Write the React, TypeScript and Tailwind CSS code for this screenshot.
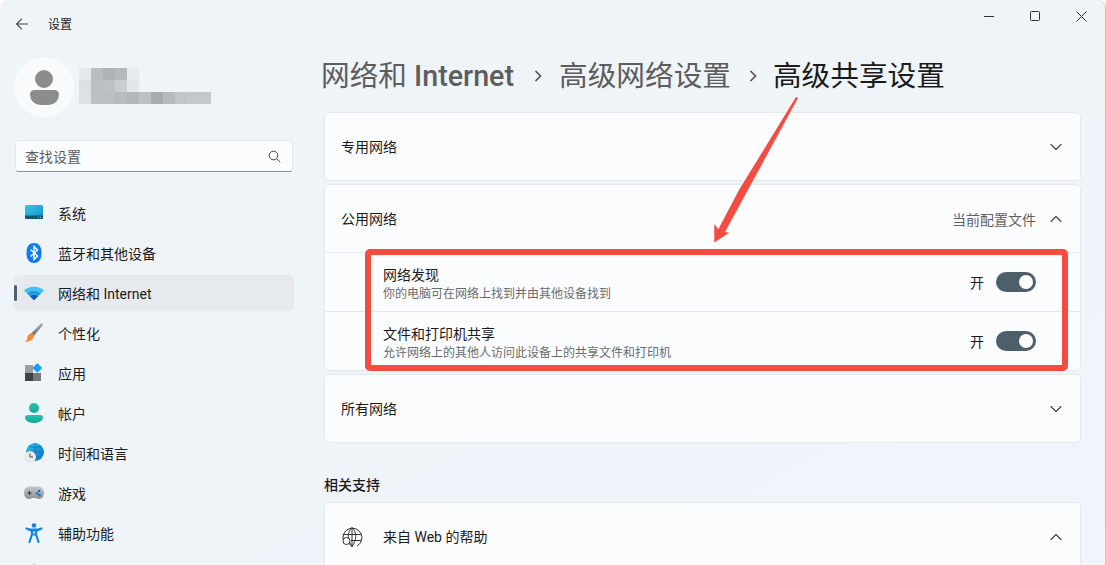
import React from "react";

function SysIcon() {
  return (
    <svg width="20" height="20" viewBox="0 0 20 20">
      <defs><linearGradient id="s1" x1="0" y1="0" x2="1" y2="1"><stop offset="0" stopColor="#38c6e6" /><stop offset="1" stopColor="#1490c8" /></linearGradient></defs>
      <rect x="1" y="2" width="18" height="14" rx="1.5" fill="url(#s1)" />
      <path d="M1 12.5h18v2a1.5 1.5 0 0 1-1.5 1.5h-15A1.5 1.5 0 0 1 1 14.500z" fill="#0f5673" />
      <rect x="14" y="13.800" width="1" height="1" fill="#9fd8ea" /><rect x="16" y="13.800" width="1" height="1" fill="#9fd8ea" />
    </svg>
  );
}
function BtIcon() {
  return (
    <svg width="20" height="20" viewBox="0 0 20 20">
      <path d="M10 0c4.500 0 7.500 3 7.500 10s-3 10-7.500 10-7.500-3-7.500-10S5.500 0 10 0z" fill="#0a7cf0" />
      <path d="M6.500 6.500l7 6.500-3.500 3.500V3.500l3.500 3.500-7 6.500" fill="none" stroke="#fff" strokeWidth="1.400" />
    </svg>
  );
}
function WifiIcon() {
  return (
    <svg width="20" height="20" viewBox="0 0 20 20">
      <g transform="translate(0 1)">
        <path d="M0 6.500C5 1.500 15 1.500 20 6.500l-3 3C12.500 5.500 7.500 5.500 3 9.500z" fill="#3fc3f2" />
        <path d="M3 9.500C7.500 5.500 12.500 5.500 17 9.500l-2.800 2.800C11.500 10 8.500 10 5.800 12.300z" fill="#1b9de2" />
        <path d="M5.800 12.300C8.500 10 11.500 10 14.200 12.300L10 16.500z" fill="#0a5fb4" />
      </g>
    </svg>
  );
}
function BrushIcon() {
  return (
    <svg width="20" height="20" viewBox="0 0 20 20">
      <defs><linearGradient id="b1" x1="0" y1="1" x2="1" y2="0"><stop offset="0" stopColor="#6d7075" /><stop offset="1" stopColor="#a9adb2" /></linearGradient></defs>
      <path d="M7 10.500L17 0.500c1-0.500 2 0 2 1.500L10 13z" fill="url(#b1)" />
      <path d="M6.500 10.500c1.500-0.500 3 0.500 3.500 2.500-0.500 3-3 5.500-9 6 2-1.500 2-3 2.500-5 0.300-1.500 1.500-3 3-3.500z" fill="#f08a36" />
    </svg>
  );
}
function AppsIcon() {
  return (
    <svg width="20" height="20" viewBox="0 0 20 20">
      <rect x="1" y="2" width="8" height="8" fill="#9a9da1" />
      <rect x="1" y="10" width="8" height="8" fill="#3f4245" />
      <rect x="9" y="10" width="8" height="8" fill="#74777b" />
      <rect x="9.800" y="1.500" width="7" height="7" rx="1" transform="rotate(45 13.300 5)" fill="#18a0ec" />
    </svg>
  );
}
function UserIcon() {
  return (
    <svg width="20" height="20" viewBox="0 0 20 20">
      <defs><linearGradient id="u1" x1="0" y1="0" x2="0" y2="1"><stop offset="0" stopColor="#25c4ad" /><stop offset="1" stopColor="#17a898" /></linearGradient></defs>
      <circle cx="10" cy="5" r="5" fill="url(#u1)" />
      <path d="M3.500 12h13a2.500 2.500 0 0 1 2.500 2.500c0 3-4 5.500-9 5.500s-9-2.500-9-5.500A2.500 2.500 0 0 1 3.500 12z" fill="url(#u1)" />
    </svg>
  );
}
function TimeIcon() {
  return (
    <svg width="20" height="20" viewBox="0 0 20 20">
      <defs><linearGradient id="t1" x1="0" y1="0" x2="1" y2="1"><stop offset="0" stopColor="#2fc3e8" /><stop offset="1" stopColor="#0b70c9" /></linearGradient></defs>
      <circle cx="11" cy="9" r="9" fill="url(#t1)" />
      <path d="M2 9h18M11 0v18M5 3c4 2 8 2 12 0M5 15c4-2 8-2 12 0" stroke="#0a63b0" strokeWidth=".6" fill="none" />
      <circle cx="6" cy="14" r="6" fill="#e9e9ea" />
      <path d="M6 10.500V14h3" stroke="#444" strokeWidth="1" fill="none" />
    </svg>
  );
}
function GameIcon() {
  return (
    <svg width="20" height="20" viewBox="0 0 20 20">
      <defs><linearGradient id="g1" x1="0" y1="0" x2="0" y2="1"><stop offset="0" stopColor="#c3c6cb" /><stop offset="1" stopColor="#8d9096" /></linearGradient></defs>
      <path d="M5.500 3.500h9C18 3.500 20 6.500 20 10c0 3-2 6-5 6-2 0-2.500-1-3.500-1h-3c-1 0-1.500 1-3.500 1-3 0-5-3-5-6 0-3.500 2-6.500 5.500-6.500z" fill="url(#g1)" />
      <path d="M3.500 10h4M5.500 8v4" stroke="#333" strokeWidth="1" />
      <circle cx="15" cy="8" r="1.300" fill="#1273cf" /><circle cx="13" cy="10.500" r="1.300" fill="#1273cf" /><circle cx="15.500" cy="12" r="1.300" fill="#1273cf" />
    </svg>
  );
}
function AccessIcon() {
  return (
    <svg width="20" height="20" viewBox="0 0 20 20">
      <circle cx="10" cy="2.500" r="2.300" fill="#1187e0" />
      <path d="M2.500 5.500L7 7.500h6l4.500-2M8 7.500v4L5.500 19M12 7.500v4l2.500 7.500M8.500 11.500h3" stroke="#1187e0" strokeWidth="2.200" fill="#1187e0" strokeLinecap="round" strokeLinejoin="round" />
    </svg>
  );
}
function ShieldIcon() {
  return (
    <svg width="20" height="20" viewBox="0 0 20 20">
      <path d="M10 1c2 2 5 3 8 3v6c0 5-4 8-8 9-4-1-8-4-8-9V4c3 0 6-1 8-3z" fill="#9a9da1" />
    </svg>
  );
}
function Chevron({ up }: { up?: boolean }) {
  return (
    <svg width="12" height="12" viewBox="0 0 12 12" fill="none" stroke="#404040" strokeWidth="1.100" strokeLinecap="round" strokeLinejoin="round">
      <path d={up ? "M1 8.500l5-5 5 5" : "M1 3.500l5 5 5-5"} />
    </svg>
  );
}
function Crumb({ className }: { className: string }) {
  return (
    <svg className={className} width="8" height="12" viewBox="0 0 8 12" fill="none" stroke="#555" strokeWidth="1.700">
      <path d="M1.500 1L6.500 6l-5 5" />
    </svg>
  );
}

const nav: [React.ReactNode, string][] = [
  [<SysIcon />, "系统"],
  [<BtIcon />, "蓝牙和其他设备"],
  [<WifiIcon />, "网络和 Internet"],
  [<BrushIcon />, "个性化"],
  [<AppsIcon />, "应用"],
  [<UserIcon />, "帐户"],
  [<TimeIcon />, "时间和语言"],
  [<GameIcon />, "游戏"],
  [<AccessIcon />, "辅助功能"],
  [<ShieldIcon />, ""],
];

const mosaic: string[][] = [
  ["#e4e9ec", "#b8bdbf", "#aeb3b5", "#b4b9bb", "#e6ebee"],
  ["#dbe0e3", "#bbc0c3", "#bcc1c4", "#c9ced0", "#e2e7e9"],
  ["#dce1e4", "#bbc0c3", "#babfc2", "#b6bbbe", "#b1b6b9", "#bcc1c4", "#a7acaf", "#b5babd", "#c1c6c9", "#c3c8cb", "#c3c8cb"],
];

function Toggle() {
  return (
    <div className="flex items-center gap-3">
      <span className="text-[14px] leading-5 pt-[2px] text-[#1b1b1b]">开</span>
      <div className="w-10 h-5 rounded-full bg-[#4d5f6b] flex items-center justify-end pr-[3px]">
        <div className="w-[14px] h-[14px] rounded-full bg-white" />
      </div>
    </div>
  );
}

function Row({ title, desc, last }: { title: string; desc: string; last?: boolean }) {
  return (
    <div className={`flex items-center justify-between pl-[58px] pr-[44px] ${last ? "h-[58px]" : "h-[59px] border-b border-[#e5e8eb]"}`}>
      <div className="flex flex-col pt-[4px]">
        <span className="text-[14px] leading-[19px] text-[#1b1b1b]">{title}</span>
        <span className="text-[12px] leading-[16px] mt-px text-[#6b6b6b]">{desc}</span>
      </div>
      <Toggle />
    </div>
  );
}

function Card({ children }: { children: React.ReactNode }) {
  return <div className="rounded-[5px] border border-[#e6e9ec] bg-[#fbfcfe] overflow-hidden">{children}</div>;
}

function Head({ label, up, right, icon }: { label: string; up?: boolean; right?: string; icon?: React.ReactNode }) {
  return (
    <div className="h-[67px] flex items-center pl-4 pr-[18px]">
      {icon}
      <span className="text-[14px] pt-[2px] text-[#1b1b1b]">{label}</span>
      <div className="ml-auto flex items-center gap-[14px]">
        {right && <span className="text-[14px] pt-[2px] text-[#5f5f5f] leading-5">{right}</span>}
        <Chevron up={up} />
      </div>
    </div>
  );
}

export default function App() {
  return (
    <div
      className="w-[1106px] h-[565px] overflow-hidden bg-white"
      style={{ fontFamily: 'Roboto, "Noto Sans CJK SC", sans-serif' }}
    >
      <div className="relative w-[1106px] h-[565px] overflow-hidden rounded-t-lg border-r border-[#c4c8cb] bg-gradient-to-br from-[#eef4f7] to-[#f0f4fb] flex flex-col">
        <div className="h-12 shrink-0 flex items-center pl-4">
          <svg width="12" height="12" viewBox="0 0 12 12" fill="none" stroke="#444" strokeWidth="1.100" strokeLinecap="round" strokeLinejoin="round">
            <path d="M.6 6h11M5.500 1.200L.6 6l4.900 4.800" />
          </svg>
          <span className="ml-[20px] mt-px text-[12px] text-[#1b1b1b]">设置</span>
          <div className="ml-auto self-start flex items-center mr-px">
            <div className="w-[46px] h-8 flex items-center justify-center">
              <div className="w-[10px] h-px bg-[#333]" />
            </div>
            <div className="w-[46px] h-8 flex items-center justify-center">
              <div className="w-[10px] h-[10px] rounded-[1.500px] border border-[#333]" />
            </div>
            <div className="w-[46px] h-8 flex items-center justify-center">
              <svg width="11" height="11" viewBox="0 0 11 11" stroke="#333" strokeWidth="1"><path d="M.5.5l10 10M10.500.5l-10 10" /></svg>
            </div>
          </div>
        </div>

        <div className="flex flex-1 min-h-0">
          <aside className="w-[324px] shrink-0 pl-[14px] pr-[30px]">
            <div className="flex items-start h-[92px] pt-[9px]">
              <div className="w-[60px] h-[60px] rounded-full bg-[#f9fafb] flex flex-col items-center justify-center">
                <div className="w-[18px] h-[18px] rounded-full bg-[#8c8c8c]" />
                <div className="w-[29px] h-[15px] mt-[2px] rounded-t-[6px] rounded-b-[14px] bg-[#8c8c8c]" />
              </div>
              <div className="ml-[5px] mt-[11px] flex flex-col">
                {mosaic.map((r, i) => (
                  <div key={i} className="flex">
                    {r.map((c, j) => (
                      <div key={j} className="w-3 h-3" style={{ background: c }} />
                    ))}
                  </div>
                ))}
              </div>
            </div>

            <div className="h-[32px] ml-px mr-px rounded-[4px] bg-[#fbfcfd] border border-[#e5e8ea] border-b-[#8b8f92] flex items-center pl-[9px] pr-[11px]">
              <span className="text-[14px] pt-[2px] text-[#5c5c5c]">查找设置</span>
              <svg className="ml-auto" width="13" height="13" viewBox="0 0 13 13" fill="none" stroke="#444" strokeWidth="1"><circle cx="5.500" cy="5.500" r="4.300" /><path d="M8.700 8.700l3.600 3.600" /></svg>
            </div>

            <nav className="mt-[23px] flex flex-col gap-1">
              {nav.map(([icon, label], i) => (
                <div key={i} className={`relative h-9 shrink-0 rounded-[5px] flex items-center pl-[10px] ${i === 2 ? "bg-[#e6e9ed]" : ""}`}>
                  {i === 2 && <div className="absolute left-0 top-[10px] w-[3px] h-[16px] rounded-full bg-[#4d5f6b]" />}
                  <span className="w-5 h-5 shrink-0">{icon}</span>
                  {label && <span className="ml-[14px] pt-[2px] text-[14px] text-[#1b1b1b]">{label}</span>}
                </div>
              ))}
            </nav>
          </aside>

          <main className="flex-1 min-w-0 pr-[24px]">
            <div className="h-[64px] -ml-[3px] flex items-center pb-[8px] text-[28.67px] leading-9">
              <span className="text-[#5d5d5d]">网络和 <span className="font-medium">Internet</span></span>
              <Crumb className="ml-[20px] mr-[17px]" />
              <span className="text-[#5d5d5d]">高级网络设置</span>
              <Crumb className="ml-[18px] mr-[16px]" />
              <span className="text-[#1b1b1b]">高级共享设置</span>
            </div>
            <div className="flex flex-col gap-[3px]">
              <Card><Head label="专用网络" /></Card>
              <Card>
                <div className="border-b border-[#e5e8eb]"><Head label="公用网络" up right="当前配置文件" /></div>
                <Row title="网络发现" desc="你的电脑可在网络上找到并由其他设备找到" />
                <Row title="文件和打印机共享" desc="允许网络上的其他人访问此设备上的共享文件和打印机" last />
              </Card>
              <Card><Head label="所有网络" /></Card>
            </div>
            <h2 className="mt-[32px] mb-[7px] text-[14px] leading-5 font-medium text-[#1b1b1b]">相关支持</h2>
            <Card>
              <Head
                label="来自 Web 的帮助"
                up
                icon={
                  <svg className="mr-[20px]" width="22" height="22" viewBox="0 0 22 22" fill="none" stroke="#333" strokeWidth="1">
                    <path d="M3 16A9.500 9.500 0 1 1 16 20" />
                    <path d="M11 1.500c-5 5-5 12 0 19M11 1.500c5 5 5 12 0 19M1.800 8.500h18.400M10 14.500h10M11 1.500V21" />
                    <circle cx="5.500" cy="15" r="3.500" fill="#fbfcfe" />
                    <path d="M8 17.500l3 3" />
                  </svg>
                }
              />
            </Card>
          </main>
        </div>

        <div className="absolute left-[365px] top-[249px] w-[703px] h-[122px] rounded-[5px] border-[6px] border-[#f44c40]" />
        <svg className="absolute left-[710px] top-[95px]" width="90" height="152" viewBox="0 0 90 152">
          <polygon points="86,2 88,3 15,137 19.300,137.700 4.300,147.500 4.300,129 8.300,134.300 29,95" fill="#f44c40" />
        </svg>
      </div>
    </div>
  );
}
